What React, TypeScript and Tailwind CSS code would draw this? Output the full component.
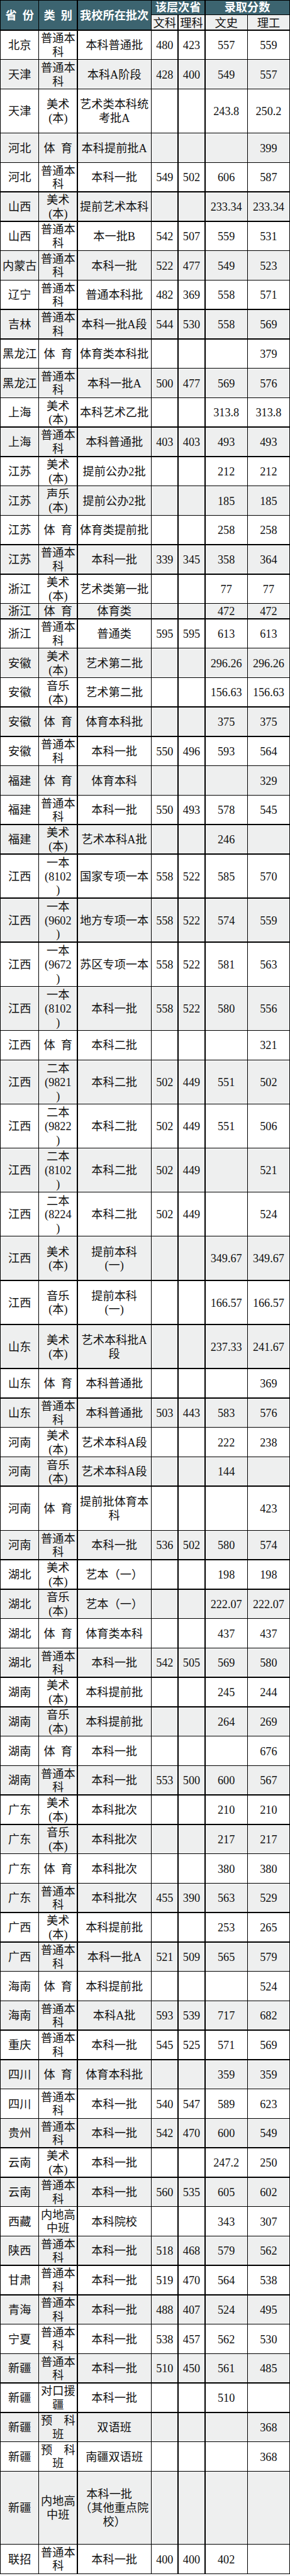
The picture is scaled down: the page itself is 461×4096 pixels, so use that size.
type Line = string | [string, string];
type Kind = "n" | "t" | "s" | "l";
type Row = [string, Line[], Line[], string, string, string, string, Kind?];

const PT = ["普通本", "科"];
const MS = ["美术", "(本)"];
const YY = ["音乐", "(本)"];
const TY = ["体\u2002育"];
const YK = ["预\u3000科", "班"];
const ND = ["内地高", "中班"];

const ROWS: Row[] = [
  ["北京", PT, ["本科普通批"], "480", "423", "557", "559"],
  ["天津", PT, ["本科A阶段"], "428", "400", "549", "557"],
  ["天津", MS, ["艺术类本科统", "考批A"], "", "", "243.8", "250.2", "t"],
  ["河北", TY, ["本科提前批A"], "", "", "", "399"],
  ["河北", PT, ["本科一批"], "549", "502", "606", "587"],
  ["山西", MS, ["提前艺术本科"], "", "", "233.34", "233.34"],
  ["山西", PT, ["本一批B"], "542", "507", "559", "531"],
  ["内蒙古", PT, ["本科一批"], "522", "477", "549", "523"],
  ["辽宁", PT, ["普通本科批"], "482", "369", "558", "571"],
  ["吉林", PT, ["本科一批A段"], "544", "530", "558", "569"],
  ["黑龙江", TY, ["体育类本科批"], "", "", "", "379"],
  ["黑龙江", PT, ["本科一批A"], "500", "477", "569", "576"],
  ["上海", MS, ["本科艺术乙批"], "", "", "313.8", "313.8"],
  ["上海", PT, ["本科普通批"], "403", "403", "493", "493"],
  ["江苏", MS, ["提前公办2批"], "", "", "212", "212"],
  ["江苏", ["声乐", "(本)"], ["提前公办2批"], "", "", "185", "185"],
  ["江苏", TY, ["体育类提前批"], "", "", "258", "258"],
  ["江苏", PT, ["本科一批"], "339", "345", "358", "364"],
  ["浙江", MS, ["艺术类第一批"], "", "", "77", "77"],
  ["浙江", TY, ["体育类"], "", "", "472", "472", "s"],
  ["浙江", PT, ["普通类"], "595", "595", "613", "613"],
  ["安徽", MS, ["艺术第二批"], "", "", "296.26", "296.26"],
  ["安徽", YY, ["艺术第二批"], "", "", "156.63", "156.63"],
  ["安徽", TY, ["体育本科批"], "", "", "375", "375"],
  ["安徽", PT, ["本科一批"], "550", "496", "593", "564"],
  ["福建", TY, ["体育本科"], "", "", "", "329"],
  ["福建", PT, ["本科一批"], "550", "493", "578", "545"],
  ["福建", MS, ["艺术本科A批"], "", "", "246", ""],
  ["江西", ["一本", "(8102", ")"], ["国家专项一本"], "558", "522", "585", "570", "t"],
  ["江西", ["一本", "(9602", ")"], ["地方专项一本"], "558", "522", "574", "559", "t"],
  ["江西", ["一本", "(9672", ")"], ["苏区专项一本"], "558", "522", "581", "563", "t"],
  ["江西", ["一本", "(8102", ")"], ["本科一批"], "558", "522", "580", "556", "t"],
  ["江西", TY, ["本科二批"], "", "", "", "321"],
  ["江西", ["二本", "(9821", ")"], ["本科二批"], "502", "449", "551", "502", "t"],
  ["江西", ["二本", "(9822", ")"], ["本科二批"], "502", "449", "551", "506", "t"],
  ["江西", ["二本", "(8102", ")"], ["本科二批"], "502", "449", "", "521", "t"],
  ["江西", ["二本", "(8224", ")"], ["本科二批"], "502", "449", "", "524", "t"],
  ["江西", MS, ["提前本科", "(一)"], "", "", "349.67", "349.67", "t"],
  ["江西", YY, ["提前本科", "(一)"], "", "", "166.57", "166.57", "t"],
  ["山东", MS, ["艺术本科批A", "段"], "", "", "237.33", "241.67", "t"],
  ["山东", TY, ["本科普通批"], "", "", "", "369"],
  ["山东", PT, ["本科普通批"], "503", "443", "583", "576"],
  ["河南", MS, ["艺术本科A段"], "", "", "222", "238"],
  ["河南", YY, ["艺术本科A段"], "", "", "144", ""],
  ["河南", TY, ["提前批体育本", "科"], "", "", "", "423", "t"],
  ["河南", PT, ["本科一批"], "536", "502", "580", "574"],
  ["湖北", MS, ["艺本（一）"], "", "", "198", "198"],
  ["湖北", YY, ["艺本（一）"], "", "", "222.07", "222.07"],
  ["湖北", TY, ["体育类本科"], "", "", "437", "437"],
  ["湖北", PT, ["本科一批"], "542", "505", "569", "580"],
  ["湖南", MS, ["本科提前批"], "", "", "245", "244"],
  ["湖南", YY, ["本科提前批"], "", "", "264", "269"],
  ["湖南", TY, ["本科一批"], "", "", "", "676"],
  ["湖南", PT, ["本科一批"], "553", "500", "600", "567"],
  ["广东", MS, ["本科批次"], "", "", "210", "210"],
  ["广东", YY, ["本科批次"], "", "", "217", "217"],
  ["广东", TY, ["本科批次"], "", "", "380", "380"],
  ["广东", PT, ["本科批次"], "455", "390", "563", "529"],
  ["广西", MS, ["本科提前批"], "", "", "253", "265"],
  ["广西", PT, ["本科一批A"], "521", "509", "565", "579"],
  ["海南", TY, ["本科提前批"], "", "", "", "524"],
  ["海南", PT, ["本科A批"], "593", "539", "717", "682"],
  ["重庆", PT, ["本科一批"], "545", "525", "571", "569"],
  ["四川", TY, ["体育本科批"], "", "", "359", "359"],
  ["四川", PT, ["本科一批"], "540", "547", "589", "623"],
  ["贵州", PT, ["本科一批"], "542", "470", "600", "549"],
  ["云南", MS, ["本科一批"], "", "", "247.2", "250"],
  ["云南", PT, ["本科一批"], "560", "535", "605", "602"],
  ["西藏", ND, ["本科院校"], "", "", "343", "307"],
  ["陕西", PT, ["本科一批"], "518", "468", "579", "562"],
  ["甘肃", PT, ["本科一批"], "519", "470", "564", "538"],
  ["青海", PT, ["本科一批"], "488", "407", "524", "495"],
  ["宁夏", PT, ["本科一批"], "538", "457", "562", "530"],
  ["新疆", PT, ["本科一批"], "510", "450", "561", "485"],
  ["新疆", ["对口援", "疆"], ["本科一批"], "", "", "510", ""],
  ["新疆", YK, ["双语班"], "", "", "", "368"],
  ["新疆", YK, ["南疆双语班"], "", "", "", "368"],
  ["新疆", ND, [["本科一批", "pr-[16px]"], "（其他重点院", "校）"], "", "", "", "", "l"],
  ["联招", PT, ["本科一批"], "400", "400", "402", ""],
];

const HEIGHT: Record<Kind, string> = {
  n: "h-[45.37px]",
  t: "h-[68.76px]",
  s: "h-[22.9px]",
  l: "h-[114.9px]",
};

function Cell({ lines, bg, h }: { lines: Line[]; bg: string; h: string }) {
  return (
    <div className={`${bg} ${h} flex flex-col items-center justify-center pt-[3px] text-[#111]`}>
      {lines.map((line, i) =>
        typeof line === "string" ? (
          <div key={i} className="whitespace-nowrap">
            {line}
          </div>
        ) : (
          <div key={i} className={`whitespace-nowrap ${line[1]}`}>
            {line[0]}
          </div>
        )
      )}
    </div>
  );
}

export default function App() {
  return (
    <div className="w-[461px] bg-white font-['Liberation_Serif','Noto_Sans_CJK_SC',serif] text-[18.2px] leading-[21.7px]">
      <div className="grid grid-cols-[59.7px_59.7px_116.2px_41.3px_41.3px_66.3px_1fr] gap-[1.4px] bg-black p-[1.4px]">
        {/* header */}
        <div className="row-span-2 flex items-center justify-center bg-[#3c6470] pt-[4px] font-bold text-white whitespace-pre">
          省{"\u2002"}份
        </div>
        <div className="row-span-2 flex items-center justify-center bg-[#3c6470] pt-[4px] font-bold text-white whitespace-pre">
          类{"\u2002"}别
        </div>
        <div className="row-span-2 flex items-center justify-center bg-[#3c6470] pt-[4px] font-bold text-white">
          我校所在批次
        </div>
        <div className="col-span-2 flex h-[21.6px] items-center justify-center bg-[#3c6470] pt-[1px] font-bold text-white">
          该层次省
        </div>
        <div className="col-span-2 flex h-[21.6px] items-center justify-center bg-[#3c6470] pt-[1px] font-bold text-white">
          录取分数
        </div>
        {["文科", "理科", "文史", "理工"].map((t) => (
          <div key={t} className="flex h-[22.9px] items-center justify-center bg-[#eeefef] pt-[4px] text-[#111]">
            {t}
          </div>
        ))}

        {/* body */}
        {ROWS.map((r, i) => {
          const bg = i % 2 === 1 ? "bg-[#eeefef]" : "bg-white";
          const h = HEIGHT[r[7] ?? "n"];
          return [
            <Cell key={`${i}-0`} lines={[r[0]]} bg={bg} h={h} />,
            <Cell key={`${i}-1`} lines={r[1]} bg={bg} h={h} />,
            <Cell key={`${i}-2`} lines={r[2]} bg={bg} h={h} />,
            <Cell key={`${i}-3`} lines={[r[3]]} bg={bg} h={h} />,
            <Cell key={`${i}-4`} lines={[r[4]]} bg={bg} h={h} />,
            <Cell key={`${i}-5`} lines={[r[5]]} bg={bg} h={h} />,
            <Cell key={`${i}-6`} lines={[r[6]]} bg={bg} h={h} />,
          ];
        })}
      </div>
    </div>
  );
}
